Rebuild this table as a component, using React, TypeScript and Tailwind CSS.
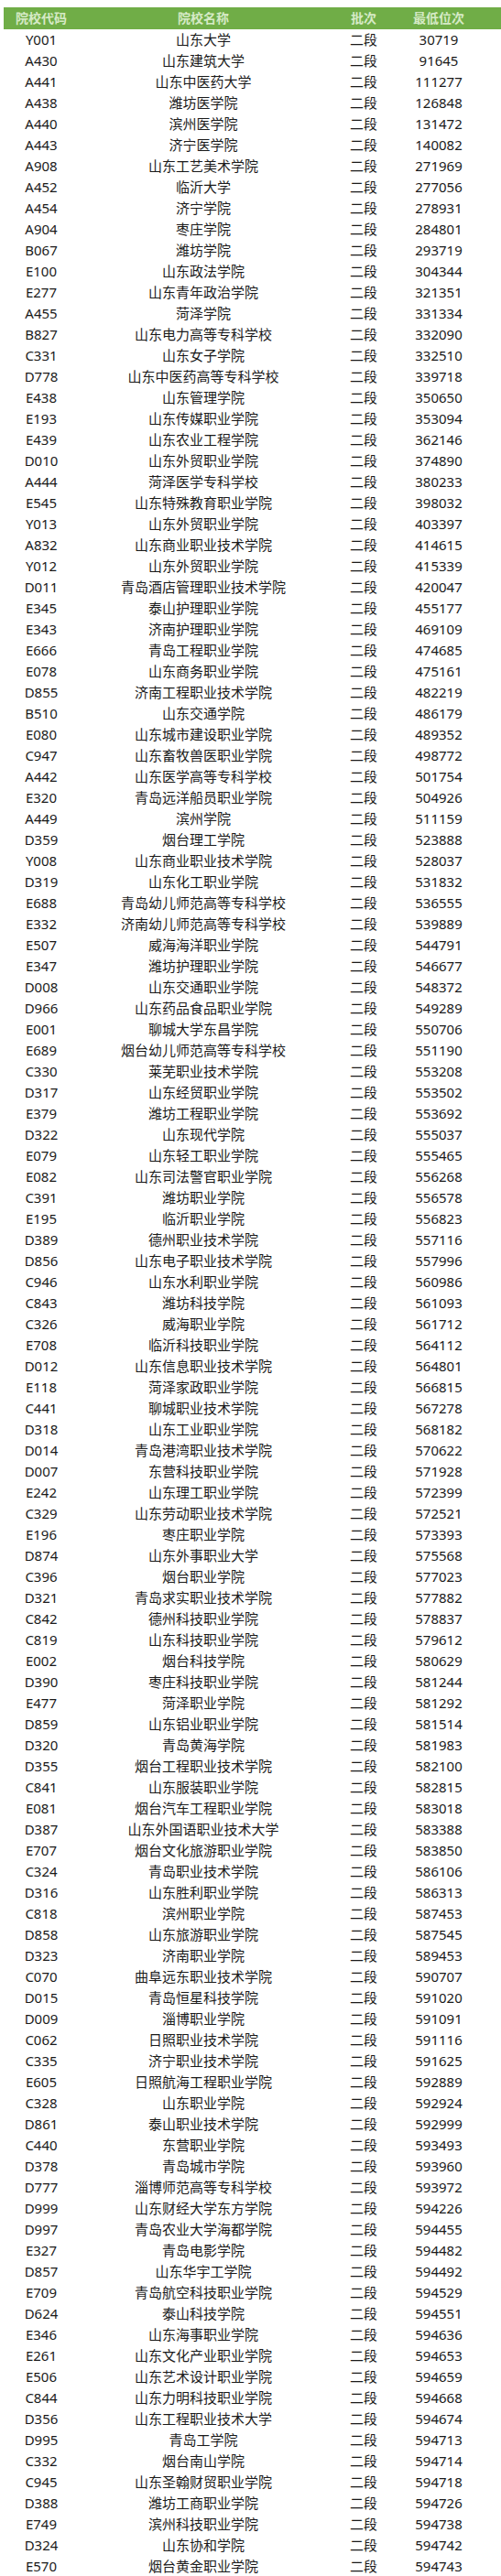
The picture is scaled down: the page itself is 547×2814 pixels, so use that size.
const raw = `Y001 山东大学 30719
A430 山东建筑大学 91645
A441 山东中医药大学 111277
A438 潍坊医学院 126848
A440 滨州医学院 131472
A443 济宁医学院 140082
A908 山东工艺美术学院 271969
A452 临沂大学 277056
A454 济宁学院 278931
A904 枣庄学院 284801
B067 潍坊学院 293719
E100 山东政法学院 304344
E277 山东青年政治学院 321351
A455 菏泽学院 331334
B827 山东电力高等专科学校 332090
C331 山东女子学院 332510
D778 山东中医药高等专科学校 339718
E438 山东管理学院 350650
E193 山东传媒职业学院 353094
E439 山东农业工程学院 362146
D010 山东外贸职业学院 374890
A444 菏泽医学专科学校 380233
E545 山东特殊教育职业学院 398032
Y013 山东外贸职业学院 403397
A832 山东商业职业技术学院 414615
Y012 山东外贸职业学院 415339
D011 青岛酒店管理职业技术学院 420047
E345 泰山护理职业学院 455177
E343 济南护理职业学院 469109
E666 青岛工程职业学院 474685
E078 山东商务职业学院 475161
D855 济南工程职业技术学院 482219
B510 山东交通学院 486179
E080 山东城市建设职业学院 489352
C947 山东畜牧兽医职业学院 498772
A442 山东医学高等专科学校 501754
E320 青岛远洋船员职业学院 504926
A449 滨州学院 511159
D359 烟台理工学院 523888
Y008 山东商业职业技术学院 528037
D319 山东化工职业学院 531832
E688 青岛幼儿师范高等专科学校 536555
E332 济南幼儿师范高等专科学校 539889
E507 威海海洋职业学院 544791
E347 潍坊护理职业学院 546677
D008 山东交通职业学院 548372
D966 山东药品食品职业学院 549289
E001 聊城大学东昌学院 550706
E689 烟台幼儿师范高等专科学校 551190
C330 莱芜职业技术学院 553208
D317 山东经贸职业学院 553502
E379 潍坊工程职业学院 553692
D322 山东现代学院 555037
E079 山东轻工职业学院 555465
E082 山东司法警官职业学院 556268
C391 潍坊职业学院 556578
E195 临沂职业学院 556823
D389 德州职业技术学院 557116
D856 山东电子职业技术学院 557996
C946 山东水利职业学院 560986
C843 潍坊科技学院 561093
C326 威海职业学院 561712
E708 临沂科技职业学院 564112
D012 山东信息职业技术学院 564801
E118 菏泽家政职业学院 566815
C441 聊城职业技术学院 567278
D318 山东工业职业学院 568182
D014 青岛港湾职业技术学院 570622
D007 东营科技职业学院 571928
E242 山东理工职业学院 572399
C329 山东劳动职业技术学院 572521
E196 枣庄职业学院 573393
D874 山东外事职业大学 575568
C396 烟台职业学院 577023
D321 青岛求实职业技术学院 577882
C842 德州科技职业学院 578837
C819 山东科技职业学院 579612
E002 烟台科技学院 580629
D390 枣庄科技职业学院 581244
E477 菏泽职业学院 581292
D859 山东铝业职业学院 581514
D320 青岛黄海学院 581983
D355 烟台工程职业技术学院 582100
C841 山东服装职业学院 582815
E081 烟台汽车工程职业学院 583018
D387 山东外国语职业技术大学 583388
E707 烟台文化旅游职业学院 583850
C324 青岛职业技术学院 586106
D316 山东胜利职业学院 586313
C818 滨州职业学院 587453
D858 山东旅游职业学院 587545
D323 济南职业学院 589453
C070 曲阜远东职业技术学院 590707
D015 青岛恒星科技学院 591020
D009 淄博职业学院 591091
C062 日照职业技术学院 591116
C335 济宁职业技术学院 591625
E605 日照航海工程职业学院 592889
C328 山东职业学院 592924
D861 泰山职业技术学院 592999
C440 东营职业学院 593493
D378 青岛城市学院 593960
D777 淄博师范高等专科学校 593972
D999 山东财经大学东方学院 594226
D997 青岛农业大学海都学院 594455
E327 青岛电影学院 594482
D857 山东华宇工学院 594492
E709 青岛航空科技职业学院 594529
D624 泰山科技学院 594551
E346 山东海事职业学院 594636
E261 山东文化产业职业学院 594653
E506 山东艺术设计职业学院 594659
C844 山东力明科技职业学院 594668
D356 山东工程职业技术大学 594674
D995 青岛工学院 594713
C332 烟台南山学院 594714
C945 山东圣翰财贸职业学院 594718
D388 潍坊工商职业学院 594726
E749 滨州科技职业学院 594738
D324 山东协和学院 594742
E570 烟台黄金职业学院 594743`;

const rows = raw.split("\n").map((line) => {
  const [code, name, rank] = line.trim().split(" ");
  return { code, name, rank };
});

const App = () => {
  return (
    <div
      className="w-full min-h-screen bg-white pt-[8px] text-[#1a1a1a]"
      style={{ fontFamily: '"Noto Sans", "Noto Sans CJK SC", sans-serif' }}
    >
      <div className="ml-[4px] h-[24px] bg-[#70ad47] grid grid-cols-[82px_272px_78px_86px_1fr] items-center text-[14px] font-bold text-[#d6eac6] leading-[24px]">
        <div className="text-center">院校代码</div>
        <div className="text-center">院校名称</div>
        <div className="text-center">批次</div>
        <div className="text-center">最低位次</div>
        <div></div>
      </div>
      {rows.map((r) => (
        <div
          key={r.code + r.rank}
          className="ml-[4px] h-[23px] grid grid-cols-[82px_272px_78px_86px_1fr] items-center text-[15px] leading-[23px]"
        >
          <div className="text-center">{r.code}</div>
          <div className="text-center whitespace-nowrap">{r.name}</div>
          <div className="text-center">二段</div>
          <div className="text-center">{r.rank}</div>
          <div></div>
        </div>
      ))}
    </div>
  );
};

export default App;
